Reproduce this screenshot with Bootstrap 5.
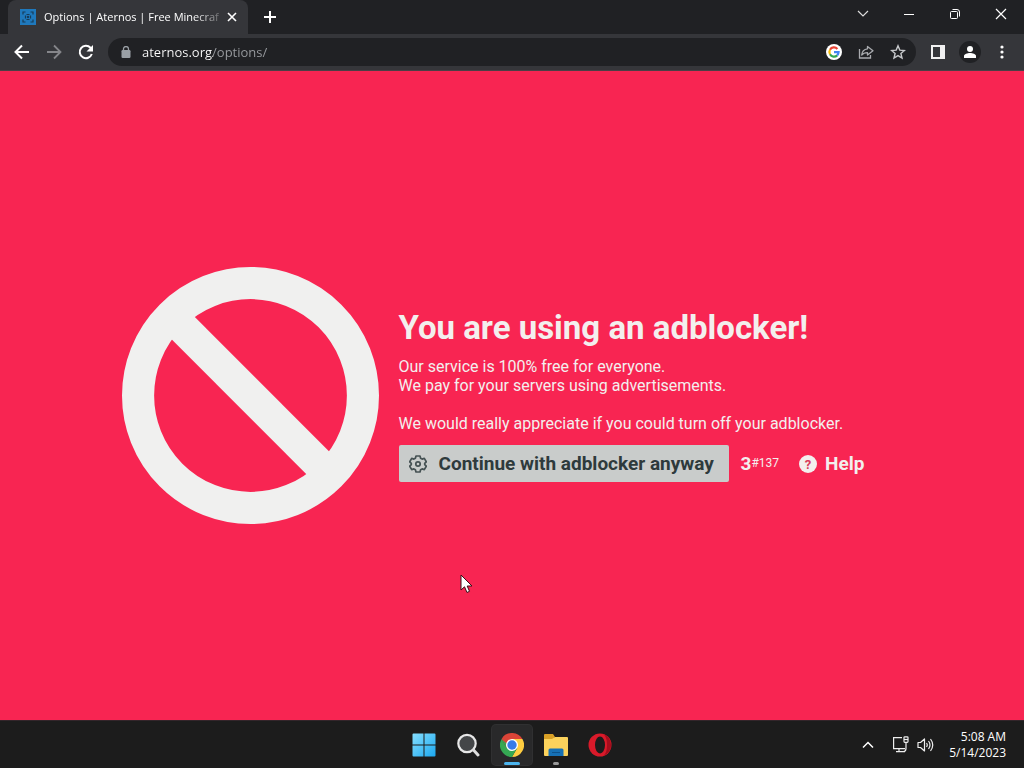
<!DOCTYPE html>
<html lang="en">
<head>
<meta charset="utf-8">
<meta name="viewport" content="width=device-width, initial-scale=1">
<title>Options | Aternos</title>
<link rel="stylesheet" href="https://cdn.jsdelivr.net/npm/bootstrap@5.3.0/dist/css/bootstrap.min.css">
<style>
  body { font-family: "Open Sans", "Noto Sans", sans-serif; font-size: 12px; background: #1c1c1c; color: #fff; }
  svg { display: block; flex: none; }
  .bare { display: flex; align-items: center; justify-content: center; padding: 0; border: 0; background: none; color: inherit; flex: none; }
  .tab-strip { height: 34px; background: #202124; padding-left: 8px; }
  .tab-item { width: 240px; background: #35363a; border-radius: 8px 8px 0 0; padding: 0 8px 0 12px; }
  .tab-label { white-space: nowrap; font-size: 11px; line-height: 20px;
    -webkit-mask-image: linear-gradient(to right, #000 85%, #0004); mask-image: linear-gradient(to right, #000 85%, #0004); }
  .tab-close { width: 16px; height: 16px; }
  .new-tab { width: 44px; }
  .win-btn { width: 46px; height: 28px; }
  .toolbar { height: 37px; background: #35363a; border-bottom: 1px solid #4b3f46; padding: 0 6px; }
  .tool-btn { width: 32px; height: 32px; }
  .omnibox { height: 28px; background: #202124; border-radius: 14px; margin: 0 6px; padding: 0 2px 0 13px; }
  .address { border: 0; outline: 0; min-width: 0; font-size: 13px; padding: 0; margin-left: 11px; height: 20px; color: transparent; caret-color: #fff;
    background: linear-gradient(to right, #fff 71px, #9a9da1 71px); -webkit-background-clip: text; background-clip: text; }
  .avatar { width: 22px; height: 22px; border-radius: 50%; background: #202124; }
  .notice { background: #f82552; color: #f3efee; font-family: Roboto, "Open Sans", sans-serif; font-size: 16px; line-height: 19px; }
  .notice-text { width: 508px; }
  .notice h1 { font-size: 33px; line-height: 38px; font-weight: 700; margin-bottom: 10px; white-space: nowrap; }
  .notice-btn { height: 37px; font-weight: 700; font-size: 19px; }
  .continue { width: 330px; background: #c9cccb; color: #2e3a3c; border-radius: 2px; justify-content: flex-start; padding-left: 10px; gap: 12px; white-space: nowrap; }
  .code { font-size: 12px; }
  .taskbar { height: 48px; background: #1c1c1c; border-top: 1px solid #33252a; }
  .app-btn { width: 40px; height: 40px; border-radius: 4px; position: relative; }
  .app-btn.current { background: #29292a; box-shadow: 0 0 0 1px #303031; }
  .app-btn.running::after { content: ""; position: absolute; bottom: 0; width: 6px; height: 3px; border-radius: 2px; background: #9a9a9a; }
  .app-btn.current::after { width: 16px; background: #4cb5ee; }
  .tray-btn { width: 32px; height: 40px; }
  .clock { font-size: 12px; line-height: 16px; width: 64px; margin-right: 18px; }
  .pointer { position: fixed; left: 460px; top: 574px; pointer-events: none; }
</style>
</head>
<body>
<div class="d-flex flex-column vh-100 overflow-hidden">
  <header>
    <div class="tab-strip d-flex">
      <div class="tab-item d-flex align-items-center">
        <svg width="16" height="16" viewBox="0 0 16 16"><path fill="#1f79bd" d="M0 0h16v16H0z"/><path fill="none" stroke="#173c59" stroke-width="1.200" d="M3 5.500V3h2.500M10.500 3H13v2.500M13 10.500V13h-2.500M5.500 13H3v-2.500M6.500 5.500h3M10.500 6.500v3M9.500 10.500h-3M5.500 9.500v-3"/><circle cx="8" cy="8" r="1.200" fill="#173c59"/></svg>
        <button class="bare tab-label ms-2">Options | Aternos | Free Minecraf</button>
        <button class="bare tab-close ms-auto" aria-label="Close tab"><svg width="10" height="10" viewBox="0 0 10 10"><path d="M1 1l8 8M9 1L1 9" stroke="#fff" stroke-width="1.600"/></svg></button>
      </div>
      <button class="bare new-tab" aria-label="New tab"><svg width="12" height="12" viewBox="0 0 12 12"><path d="M6 0v12M0 6h12" stroke="#fff" stroke-width="2"/></svg></button>
      <div class="d-flex ms-auto">
        <button class="bare win-btn" aria-label="Search tabs"><svg width="12" height="8" viewBox="0 0 12 8"><path d="M1 1l5 5 5-5" fill="none" stroke="#ddd" stroke-width="1.200"/></svg></button>
        <button class="bare win-btn" aria-label="Minimize"><svg width="10" height="10" viewBox="0 0 10 10"><path d="M0 5.500h10" stroke="#fff"/></svg></button>
        <button class="bare win-btn" aria-label="Restore"><svg width="10" height="10" viewBox="0 0 10 10" fill="none" stroke="#fff"><rect x=".5" y="2.500" width="7" height="7" rx="1"/><path d="M2.500.5H7A2.500 2.500 0 0 1 9.500 3v4.500"/></svg></button>
        <button class="bare win-btn" aria-label="Close"><svg width="12" height="12" viewBox="0 0 12 12"><path d="M1 1l10 10M11 1L1 11" stroke="#fff" stroke-width="1.200"/></svg></button>
      </div>
    </div>
    <div class="toolbar d-flex align-items-center">
      <button class="bare tool-btn" aria-label="Back"><svg width="16" height="16" viewBox="0 0 16 16" fill="none" stroke="#fff" stroke-width="2"><path d="M15 8H2.500M8 1.500L1.500 8 8 14.500"/></svg></button>
      <button class="bare tool-btn" aria-label="Forward"><svg width="16" height="16" viewBox="0 0 16 16" fill="none" stroke="#85868a" stroke-width="1.800"><path d="M1 8h12.500M8 1.500L14.500 8 8 14.500"/></svg></button>
      <button class="bare tool-btn" aria-label="Reload"><svg width="16" height="16" viewBox="0 0 16 16"><path d="M13.800 10A6.200 6.200 0 1 1 12.500 3.700L14 5.200" fill="none" stroke="#fff" stroke-width="2"/><path d="M15 1v6.500H8.500z" fill="#fff"/></svg></button>
      <div class="omnibox d-flex align-items-center flex-grow-1">
        <svg width="10" height="12" viewBox="0 0 10 12"><rect x=".5" y="4" width="9" height="8" rx="1.200" fill="#9aa0a6"/><path d="M2.500 5V3a2.500 2.500 0 0 1 5 0v2" fill="none" stroke="#9aa0a6" stroke-width="1.300"/></svg>
        <input class="address flex-grow-1" type="text" aria-label="Address" value="aternos.org/options/">
        <button class="bare tool-btn" aria-label="Search this page with Google"><svg width="16" height="16" viewBox="0 0 16 16"><circle cx="8" cy="8" r="8" fill="#fff"/><g fill="none" stroke-width="2.200"><path d="M4 5.700A4.600 4.600 0 0 1 11.400 4.900" stroke="#ea4335"/><path d="M4 5.700a4.600 4.600 0 0 0 0 4.600" stroke="#fbbc05"/><path d="M4 10.300a4.600 4.600 0 0 0 7.200 1.100" stroke="#34a853"/><path d="M11.200 11.400A4.600 4.600 0 0 0 12.600 8.100H8" stroke="#4285f4"/></g></svg></button>
        <button class="bare tool-btn" aria-label="Share"><svg width="16" height="16" viewBox="0 0 16 16" fill="none" stroke="#a9abaf" stroke-width="1.300"><path d="M1.500 5v9h11v-3"/><path d="M9.500 2.500L15 6.700 9.500 11V8.700C7 8.700 5 9.300 3.700 11 4 7.500 6 5.200 9.500 4.800z" stroke-linejoin="round"/></svg></button>
        <button class="bare tool-btn" aria-label="Bookmark this tab"><svg width="16" height="16" viewBox="0 0 16 16"><path d="M8 1.800l1.800 4.300 4.600.4-3.500 3 1.100 4.500-4-2.400-4 2.400 1.100-4.500-3.500-3 4.600-.4z" fill="none" stroke="#c6c8cb" stroke-width="1.400"/></svg></button>
      </div>
      <button class="bare tool-btn" aria-label="Side panel"><svg width="14" height="14" viewBox="0 0 14 14"><path fill="#f1f1f1" fill-rule="evenodd" d="M0 0h14v14H0zM2 2v10h7V2z"/></svg></button>
      <button class="bare tool-btn" aria-label="Profile"><span class="avatar d-flex align-items-center justify-content-center"><svg width="12" height="12" viewBox="0 0 12 12" fill="#fff"><circle cx="6" cy="3" r="3"/><path d="M0 12v-2c0-2 3.500-3 6-3s6 1 6 3v2z"/></svg></span></button>
      <button class="bare tool-btn" aria-label="Menu"><svg width="4" height="14" viewBox="0 0 4 14" fill="#fff"><circle cx="2" cy="2" r="1.600"/><circle cx="2" cy="7" r="1.600"/><circle cx="2" cy="12" r="1.600"/></svg></button>
    </div>
  </header>

  <main class="notice d-flex flex-grow-1 align-items-center justify-content-center">
    <svg width="257" height="257" viewBox="0 0 256 256" fill="none" stroke="#f0f0ef" stroke-width="32"><circle cx="128" cy="128" r="112"/><path d="M50 50l156 156"/></svg>
    <div class="notice-text ms-3 ps-1">
      <h1>You are using an adblocker!</h1>
      <p class="mb-2 pb-1">Our service is 100% free for everyone.<br>We pay for your servers using advertisements.<br><br>We would really appreciate if you could turn off your adblocker.</p>
      <div class="d-flex align-items-center">
        <button class="bare notice-btn continue">
          <svg width="18" height="18" viewBox="0 0 18 18" fill="none" stroke="#465254" stroke-width="1.700" stroke-linejoin="round"><path d="M7 1h4l.6 2.300 1.500.8 2.200-.7 2 3.400L15.700 8.400v1.200l1.600 1.600-2 3.400-2.200-.7-1.500.8L11 17H7l-.6-2.300-1.500-.8-2.200.7-2-3.400 1.600-1.600V8.400L.7 6.800l2-3.400 2.200.7 1.500-.8z"/><circle cx="9" cy="9" r="2.200"/></svg>
          Continue with adblocker anyway</button>
        <div class="notice-btn d-flex align-items-center ms-2 ps-1">3<span class="code fw-normal">#137</span></div>
        <button class="bare notice-btn ms-3 ps-1 gap-2"><svg width="18" height="18" viewBox="0 0 18 18"><circle cx="9" cy="9" r="9" fill="#f3efee"/><text x="9" y="13.500" text-anchor="middle" font-size="13" font-weight="700" fill="#d93a5c">?</text></svg>Help</button>
      </div>
    </div>
  </main>

  <footer class="taskbar row g-0 align-items-center">
    <div class="col"></div>
    <nav class="col-auto d-flex gap-1" aria-label="Taskbar">
      <button class="bare app-btn" aria-label="Start"><svg width="24" height="24" viewBox="0 0 24 24"><defs><linearGradient id="win" x2="1" y2="1"><stop stop-color="#86dfff"/><stop offset="1" stop-color="#1ba8f0"/></linearGradient></defs><path fill="url(#win)" d="M1.500.5h10v11H.5v-10a1 1 0 0 1 1-1zM12.500.5h10a1 1 0 0 1 1 1v10h-11zM.5 12.500h11v11h-10a1 1 0 0 1-1-1zM12.500 12.500h11v10a1 1 0 0 1-1 1h-10z"/></svg></button>
      <button class="bare app-btn" aria-label="Search"><svg width="24" height="24" viewBox="0 0 24 24"><circle cx="11" cy="10.500" r="8.700" fill="#444648" stroke="#e7e7e7" stroke-width="2.200"/><path d="M17.500 17l4.500 5" stroke="#ddd" stroke-width="3" stroke-linecap="round"/></svg></button>
      <button class="bare app-btn running current" aria-label="Google Chrome"><svg width="24" height="24" viewBox="0 0 24 24"><path fill="#db4437" d="M12 12L1.600 6A12 12 0 0 1 22.400 6z"/><path fill="#ffcd40" d="M12 12V6h10.400A12 12 0 0 1 12 24l5.200-9z"/><path fill="#35a853" d="M12 12l5.200 3L12 24A12 12 0 0 1 1.600 6l5.200 9z"/><path fill="#db4437" d="M1.600 6l5.200 9L12 6z"/><path fill="#35a853" d="M1.600 6l5.200 9h5z"/><circle cx="12" cy="12" r="6" fill="#fff"/><circle cx="12" cy="12" r="4.700" fill="#367be8"/></svg></button>
      <button class="bare app-btn running" aria-label="File Explorer"><svg width="24" height="24" viewBox="0 0 24 24"><path fill="#d9a026" d="M0 2a1 1 0 0 1 1-1h8l2 3-2 3H0z"/><path fill="#fbd25c" d="M0 6h8l3-2h12a1 1 0 0 1 1 1v17a1 1 0 0 1-1 1H1a1 1 0 0 1-1-1z"/><path fill="#1670b5" d="M4.500 23v-6a1.500 1.500 0 0 1 1.500-1.500h12a1.500 1.500 0 0 1 1.500 1.500v6z"/><path stroke="#0d528c" d="M8 19.500h8"/></svg></button>
      <button class="bare app-btn" aria-label="Opera"><svg width="24" height="24" viewBox="0 0 24 24"><circle cx="12" cy="12" r="11.500" fill="#d91a2a"/><path fill="#a50d1c" d="M15 1a11.500 11.500 0 0 1 0 22c3-2 4-6 4-11s-1-9-4-11z"/><ellipse cx="12" cy="12" rx="5" ry="8.500" fill="#1c1c1c"/></svg></button>
    </nav>
    <div class="col d-flex align-items-center justify-content-end">
      <button class="bare tray-btn" aria-label="Show hidden icons"><svg width="12" height="8" viewBox="0 0 12 8"><path d="M1 6.500l5-5 5 5" fill="none" stroke="#fff" stroke-width="1.500"/></svg></button>
      <button class="bare ms-2 gap-2" aria-label="Network and volume">
        <svg width="17" height="17" viewBox="0 0 17 17" fill="none" stroke="#eee" stroke-width="1.200"><path d="M10 1.600H1.600v11H13M7 12.600v3M4 15.600h9M14 6.500v6q0 3-2.500 3"/><rect x="12" y=".8" width="4" height="5.500" rx=".8"/><path d="M12 3.500h4"/></svg>
        <svg width="17" height="16" viewBox="0 0 17 16" fill="none" stroke="#eee" stroke-width="1.200"><path d="M1 5.500h2.500L7.500 2v12L3.500 10.500H1z" stroke-linejoin="round"/><path d="M9.500 6q1.500 2 0 4M11.500 4q3 4 0 8M13.500 2q4.500 6 0 12"/></svg>
      </button>
      <time class="clock text-end ms-2" datetime="2023-05-14T05:08">5:08 AM<br>5/14/2023</time>
    </div>
  </footer>
</div>
<svg class="pointer" width="13" height="20" viewBox="0 0 13 20"><path d="M1 1v15l3.500-3.200 2.500 5.700 2.500-1.200L7.200 12H12z" fill="#fff" stroke="#3a1018"/></svg>
<script src="https://cdn.jsdelivr.net/npm/bootstrap@5.3.0/dist/js/bootstrap.bundle.min.js"></script>
</body>
</html>
